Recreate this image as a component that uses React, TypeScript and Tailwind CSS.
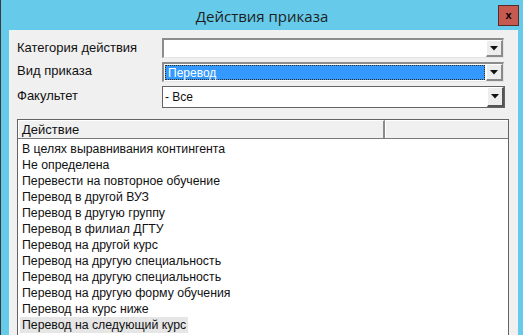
import React from "react";

const actions = [
  "В целях выравнивания контингента",
  "Не определена",
  "Перевести на повторное обучение",
  "Перевод в другой ВУЗ",
  "Перевод в другую группу",
  "Перевод в филиал ДГТУ",
  "Перевод на другой курс",
  "Перевод на другую специальность",
  "Перевод на другую специальность",
  "Перевод на другую форму обучения",
  "Перевод на курс ниже",
  "Перевод на следующий курс",
  "Перевод по собственному желанию",
];

// кнопка со стрелкой у выпадающего списка
const ArrowButton: React.FC<{ heavy?: boolean }> = ({ heavy }) => (
  <div
    className={
      "w-[17px] self-stretch flex items-center justify-center bg-[#EDEDED] border-t border-l border-t-white border-l-white " +
      (heavy
        ? "border-r-2 border-b-2 border-r-[#555] border-b-[#555]"
        : "border-r-2 border-b-2 border-r-[#8a8a8a] border-b-[#8a8a8a]")
    }
  >
    <svg width="8" height="5" viewBox="0 0 8 5">
      <path d="M0 0h8L4 4.5z" fill="#111" />
    </svg>
  </div>
);

const App: React.FC = () => {
  return (
    <div
      className="w-[523px] h-[335px] bg-[#66CBEA] border-l border-[#3a3a3a] flex flex-col overflow-hidden"
      style={{ fontFamily: '"Liberation Sans", Arial, sans-serif' }}
    >
      {/* заголовок окна */}
      <div className="h-[30px] relative flex items-center justify-center shrink-0">
        <span
          className="text-[15px] text-[#1e1e1e] mt-[2px]"
          style={{ fontFamily: '"Open Sans", "Noto Sans", sans-serif' }}
        >
          Действия приказа
        </span>
        <div className="absolute right-[4px] top-[5px] w-[21px] h-[21px] bg-[#C65A50] border border-[#5a2a26] flex items-center justify-center">
          <span className="text-[11px] font-bold leading-none text-black mb-[1px]">x</span>
        </div>
      </div>

      <div className="flex-1 ml-[8px] mr-[5px] bg-[#F0F0F0] pt-[8px] pl-[8px] flex flex-col text-[13px] text-[#111]">
        {/* Категория действия */}
        <div className="flex items-center h-[20px] pr-[14px]">
          <div className="w-[145px]">Категория действия</div>
          <div className="flex-1 h-[20px] flex bg-white border-t-2 border-l-2 border-t-[#8c8c8c] border-l-[#8c8c8c] border-b border-r border-b-[#e3e3e3] border-r-[#e3e3e3]">
            <div className="flex-1" />
            <ArrowButton />
          </div>
        </div>

        {/* Вид приказа */}
        <div className="flex items-center h-[20px] pr-[14px] mt-[4px]">
          <div className="w-[145px] -mt-[2px]">Вид приказа</div>
          <div className="flex-1 h-[20px] flex bg-white border-t-2 border-l-2 border-t-[#8c8c8c] border-l-[#8c8c8c] border-b border-r border-b-[#e3e3e3] border-r-[#e3e3e3]">
            <div className="flex-1 flex p-[1px]">
              <div className="flex-1 bg-[#3399FF] border border-dotted border-[#3a2a10] text-white text-[12px] leading-[14px] pl-[2px]">
                Перевод
              </div>
            </div>
            <ArrowButton />
          </div>
        </div>

        {/* Факультет */}
        <div className="flex items-center h-[22px] pr-[13px] mt-[4px]">
          <div className="w-[145px] -mt-[3px]">Факультет</div>
          <div className="flex-1 h-[22px] flex bg-white border border-[#646464]">
            <div className="flex-1 pl-[2px] text-[12px] leading-[20px]">- Все</div>
            <ArrowButton heavy />
          </div>
        </div>

        {/* таблица действий */}
        <div className="mt-[11px] mr-[9px] flex-1 bg-white border border-[#646464] border-b-0 flex flex-col overflow-hidden">
          <div className="flex h-[19px] shrink-0 border-b border-[#7a7a7a] bg-[#F0F0F0] text-[13px]">
            <div className="w-[367px] border-t border-l border-white border-r-2 border-r-[#8a8a8a] pl-[3px] leading-[17px]">
              Действие
            </div>
            <div className="flex-1 border-t border-l border-white" />
          </div>
          <div className="flex flex-col pt-[2px] pl-[2px] text-[12.3px]">
            {actions.map((a, i) => (
              <div key={i} className="h-[16px] leading-[16px]">
                <span className={"inline-block px-[2px] " + (i === 11 ? "bg-[#E6E6E6]" : "")}>{a}</span>
              </div>
            ))}
          </div>
        </div>
      </div>
    </div>
  );
};

export default App;
